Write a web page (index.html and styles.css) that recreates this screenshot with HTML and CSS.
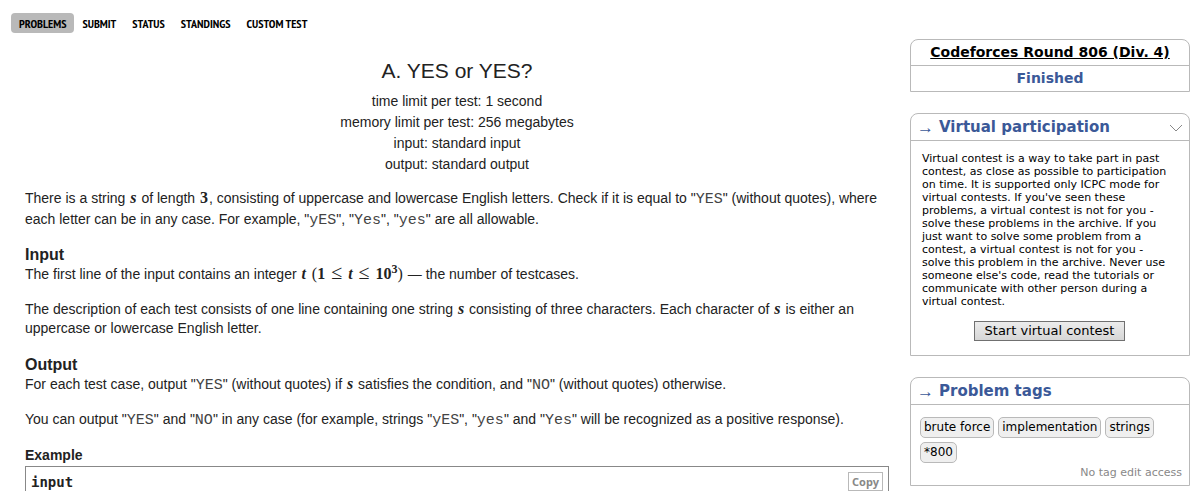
FILE: index.html
```
<!DOCTYPE html>
<html lang="en">
<head>
<meta charset="utf-8">
<title>Problem - A - Codeforces</title>
<link rel="stylesheet" href="styles.css">
</head>
<body>
<nav class="menu">
  <a class="menu-link current" href="#">PROBLEMS</a>
  <a class="menu-link" href="#">SUBMIT</a>
  <a class="menu-link" href="#">STATUS</a>
  <a class="menu-link" href="#">STANDINGS</a>
  <a class="menu-link" href="#">CUSTOM TEST</a>
</nav>
<div class="layout">
  <main class="problem">
    <header class="problem-header">
      <h1 class="title">A. YES or YES?</h1>
      <div>time limit per test: 1 second</div>
      <div>memory limit per test: 256 megabytes</div>
      <div>input: standard input</div>
      <div>output: standard output</div>
    </header>
    <section class="legend">
      <p>There is a string <i class="math">s</i> of length <span class="math">3</span>, consisting of uppercase and lowercase English letters. Check if it is equal to "<code>YES</code>" (without quotes), where each letter can be in any case. For example, "<code>yES</code>", "<code>Yes</code>", "<code>yes</code>" are all allowable.</p>
    </section>
    <section class="spec">
      <h2 class="section-title">Input</h2>
      <p>The first line of the input contains an integer <i class="math">t</i> <span class="math"><span class="paren">(</span>1<span class="rel">≤</span><i>t</i><span class="rel">≤</span>10<sup>3</sup><span class="paren">)</span></span> — the number of testcases.</p>
      <p>The description of each test consists of one line containing one string <i class="math">s</i> consisting of three characters. Each character of <i class="math">s</i> is either an uppercase or lowercase English letter.</p>
    </section>
    <section class="spec">
      <h2 class="section-title">Output</h2>
      <p>For each test case, output "<code>YES</code>" (without quotes) if <i class="math">s</i> satisfies the condition, and "<code>NO</code>" (without quotes) otherwise.</p>
      <p>You can output "<code>YES</code>" and "<code>NO</code>" in any case (for example, strings "<code>yES</code>", "<code>yes</code>" and "<code>Yes</code>" will be recognized as a positive response).</p>
    </section>
    <section>
      <h2 class="example-title">Example</h2>
      <div class="sample-head">
        <span class="sample-name">input</span>
        <button class="copy" type="button">Copy</button>
      </div>
    </section>
  </main>
  <aside class="sidebar">
    <section class="box contest">
      <div class="contest-row"><a class="contest-link" href="#">Codeforces Round 806 (Div. 4)</a></div>
      <div class="contest-row state">Finished</div>
    </section>
    <section class="box">
      <h3 class="caption"><span class="arrow">→</span> Virtual participation
        <svg class="chevron" viewBox="0 0 14 8" aria-hidden="true"><path d="M1 1L7 7L13 1"/></svg>
      </h3>
      <div class="virtual">
        <p class="virtual-text">Virtual contest is a way to take part in past contest, as close as possible to participation on time. It is supported only ICPC mode for virtual contests. If you've seen these problems, a virtual contest is not for you - solve these problems in the archive. If you just want to solve some problem from a contest, a virtual contest is not for you - solve this problem in the archive. Never use someone else's code, read the tutorials or communicate with other person during a virtual contest.</p>
        <button class="start" type="button">Start virtual contest</button>
      </div>
    </section>
    <section class="box">
      <h3 class="caption"><span class="arrow">→</span> Problem tags</h3>
      <div class="tags">
        <span class="tag">brute force</span>
        <span class="tag">implementation</span>
        <span class="tag">strings</span>
        <span class="tag">*800</span>
      </div>
      <div class="access">No tag edit access</div>
    </section>
  </aside>
</div>
</body>
</html>
```
FILE: styles.css
```
* { box-sizing: border-box; }
body {
  margin: 0;
  background: #fff;
  color: #222;
  font: 14px/21px "Liberation Sans", Arial, sans-serif;
}
h1, h2, h3, p { margin: 0; }

.menu { display: flex; padding: 13px 11px 0; }
.menu-link {
  padding: 1px 8px 0;
  border-radius: 4px;
  color: #000;
  font: bold 12px/19px "PT Sans Narrow", "Liberation Sans Narrow", "Open Sans", sans-serif;
  text-decoration: none;
}
.current { background: #b9b9b9; }

.layout {
  display: grid;
  grid-template-columns: minmax(0, 1fr) 280px;
  align-items: start;
  gap: 21px;
  padding: 6px 6px 0 25px;
}

.problem-header { padding-top: 16px; text-align: center; }
.title { margin-bottom: 4px; font-size: 21px; line-height: 32px; font-weight: normal; }
.legend { margin: 13px 0 14px; }
.spec { margin-bottom: 13px; line-height: 19px; }
.spec p { margin-bottom: 16px; }
.section-title { font-size: 16px; line-height: 21px; }
code { color: #444; font: 15px/1 "Liberation Mono", "Courier New", monospace; }
.math {
  margin: 0 1px;
  font-family: "Liberation Serif", "Times New Roman", serif;
  font-size: 16px;
  line-height: 1;
  font-weight: bold;
}
.math sup { font-size: 12px; line-height: 0; }
.paren, .rel { font-weight: normal; }
.rel { margin: 0 6px; font-size: 20px; line-height: 0; }
.example-title { font-size: 14px; line-height: 21px; }
.sample-head {
  display: flex;
  align-items: flex-start;
  justify-content: space-between;
  padding: 5px 5px 0;
  border: 1px solid #888;
  border-bottom: 0;
}
.sample-name { font: bold 14px/20px "DejaVu Sans Mono", Consolas, monospace; }
.copy {
  padding: 0 3px;
  border: 1px solid #b9b9b9;
  background: #fff;
  color: #888;
  font: bold 11px/17px "Noto Sans", sans-serif;
}

.sidebar { color: #000; font: 11px/13px "DejaVu Sans", Verdana, sans-serif; }
.box {
  margin-bottom: 21px;
  border: 1px solid #b9b9b9;
  border-radius: 8px 8px 0 0;
}
.box:last-child { margin-bottom: 0; }
.contest { text-align: center; font-size: 14px; font-weight: bold; }
.contest-row { line-height: 25px; }
.contest-row + .contest-row { border-top: 1px solid #b9b9b9; }
.contest-link { color: #000; }
.state { color: #3b5998; }
.caption {
  display: flex;
  align-items: center;
  gap: 5px;
  padding: 1px 6px 0;
  border-bottom: 1px solid #b9b9b9;
  color: #3b5998;
  font-size: 15px;
  line-height: 25px;
}
.arrow { font: 17px/24px "Liberation Serif", serif; }
.chevron { width: 14px; height: 8px; margin-left: auto; fill: none; stroke: #888; }
.virtual { padding: 11px 12px 14px 11px; }
.virtual-text { padding-right: 6px; }
.start {
  display: block;
  margin: 13px auto 0;
  padding: 0 10px;
  border: 1px solid #707070;
  background: linear-gradient(#ececec, #d6d6d6);
  color: #000;
  font: 13px/18px "DejaVu Sans", Verdana, sans-serif;
}
.tags { display: flex; flex-wrap: wrap; gap: 4px; padding: 12px 9px 0; }
.tag {
  padding: 0 3px;
  border: 1px solid #b9b9b9;
  border-radius: 5px;
  background: #efefef;
  font-size: 12px;
  line-height: 19px;
}
.access { padding: 3px 7px 6px; color: #888; text-align: right; }
```
